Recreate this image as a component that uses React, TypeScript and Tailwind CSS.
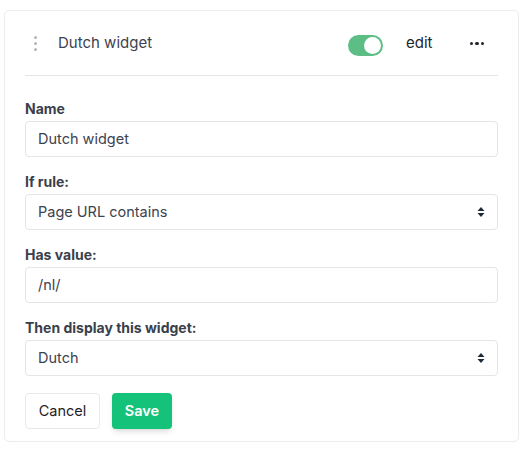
import React from "react";

const font = { fontFamily: "Inter, 'Noto Sans', sans-serif" };

const Chevrons = () => (
  <svg width="8" height="12" viewBox="0 0 8 12" className="text-gray-800">
    <path d="M4 1 L7.5 5 H0.5 Z" fill="currentColor" />
    <path d="M4 11 L7.5 7 H0.5 Z" fill="currentColor" />
  </svg>
);

const Field = ({
  label,
  value,
  select,
}: {
  label: string;
  value: string;
  select?: boolean;
}) => (
  <div className="flex flex-col gap-[2px]">
    <label className="text-[14px] leading-5 font-bold text-[#3a3f4b]">
      {label}
    </label>
    <div className="flex h-9 items-center justify-between rounded-[4px] border border-[#e4e5e8] bg-white pl-3 pr-3 text-[14.5px] text-[#3d4250]">
      <span>{value}</span>
      {select && <Chevrons />}
    </div>
  </div>
);

export default function App() {
  return (
    <div className="min-h-screen bg-white pl-[4px] pt-[10px]" style={font}>
      <div className="w-[515px] rounded-[5px] border border-[#ececee] bg-white px-5 pb-[12px]">
        <div className="flex h-[65px] items-center border-b border-[#e4e5e8] pt-[1px]">
          <div className="ml-[7px] flex w-[6px] flex-col items-center gap-[3px]">
            <span className="h-[3px] w-[3px] rounded-full bg-[#b4b6bb]" />
            <span className="h-[3px] w-[3px] rounded-full bg-[#b4b6bb]" />
            <span className="h-[3px] w-[3px] rounded-full bg-[#b4b6bb]" />
          </div>
          <span className="ml-[20px] text-[15px] text-[#3d4250]">Dutch widget</span>
          <div className="ml-auto flex items-center">
            <div className="mt-[3px] flex h-[21px] w-[35px] items-center justify-end rounded-full bg-[#5cbe84] pr-[2px]">
              <span className="h-[17px] w-[17px] rounded-full bg-white" />
            </div>
            <span className="ml-[23px] text-[15px] text-[#22252c]">edit</span>
            <span className="ml-[37px] mr-[14px] flex gap-[2px]">
              <span className="h-[3.5px] w-[3.5px] rounded-full bg-[#22252c]" />
              <span className="h-[3.5px] w-[3.5px] rounded-full bg-[#22252c]" />
              <span className="h-[3.5px] w-[3.5px] rounded-full bg-[#22252c]" />
            </span>
          </div>
        </div>
        <div className="mt-[23px] flex flex-col gap-[15px]">
          <Field label="Name" value="Dutch widget" />
          <Field label="If rule:" value="Page URL contains" select />
          <Field label="Has value:" value="/nl/" />
          <Field label="Then display this widget:" value="Dutch" select />
        </div>
        <div className="mt-[17px] flex gap-3">
          <button className="h-9 w-[75px] rounded-[4px] border border-[#e8e9ec] bg-white text-[14.5px] text-[#1f2128]">
            Cancel
          </button>
          <button className="h-9 w-[60px] rounded-[4px] bg-[#14c27a] text-[14.5px] font-semibold text-white shadow-md">
            Save
          </button>
        </div>
      </div>
    </div>
  );
}
